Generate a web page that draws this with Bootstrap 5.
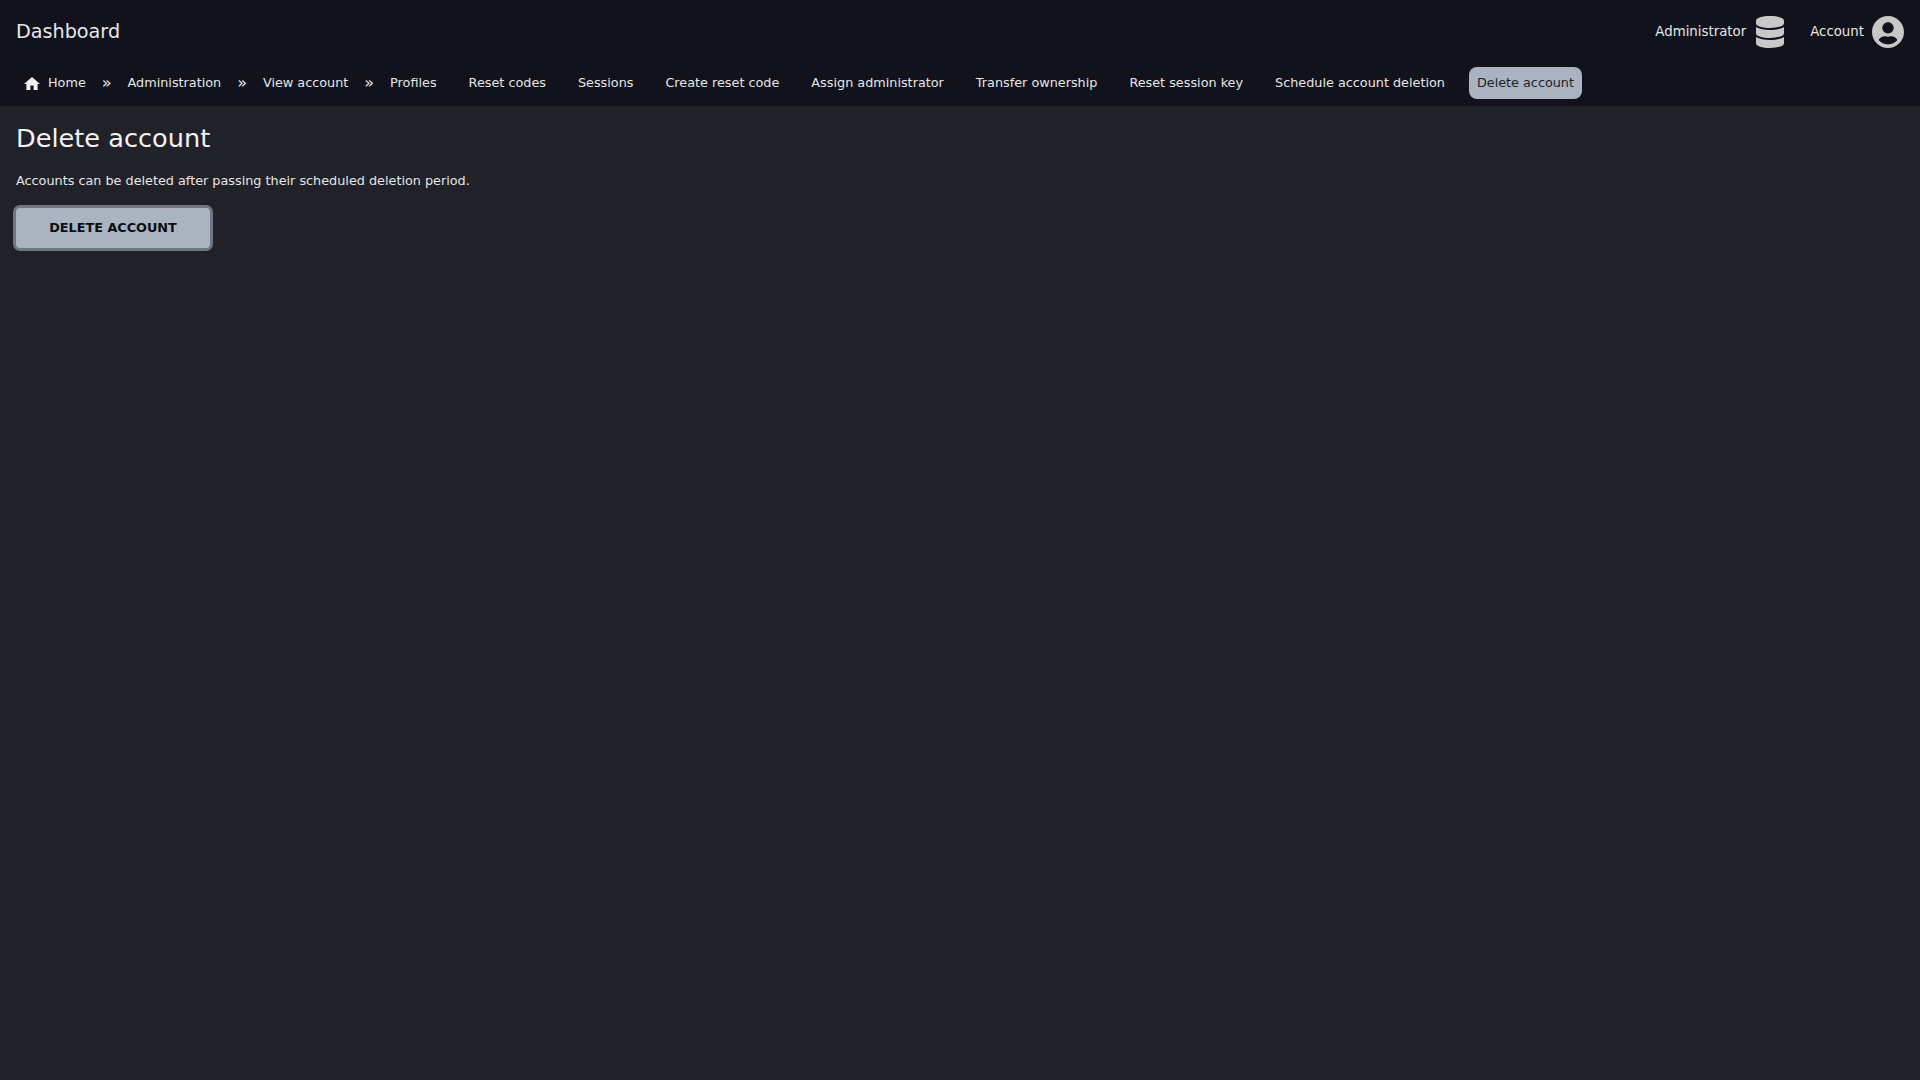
<!DOCTYPE html>
<html lang="en">
<head>
<meta charset="utf-8">
<title>Delete account</title>
<link href="https://cdn.jsdelivr.net/npm/bootstrap@5.3.0/dist/css/bootstrap.min.css" rel="stylesheet">
<style>
html, body { height: 100%; }
body { background: #212229; color: #e6e6e6; font-family: "DejaVu Sans", sans-serif; font-size: 12.8px; }
.top-head { background: #11121b; height: 106px; padding: 16px 16px 0; }
.top-row { height: 32px; }
.brand-name { color: #e8e8e8; font-size: 19.2px; line-height: 32px; text-decoration: none; }
.user-link { color: #e6e6e6; font-size: 13.33px; text-decoration: none; gap: 8px; }
.user-link svg { fill: #c8c8c8; height: 32px; display: block; }
.tool-gap { margin-left: 26px; }
.db-icon { margin-left: 2px; }
.crumbs { margin-top: 19px; gap: 16px; }
.crumb-link { color: #e6e6e6; font-size: 12.8px; line-height: 16px; padding: 8px; border-radius: 8px; text-decoration: none; display: flex; align-items: center; }
.crumb-link svg { fill: #f0f0f0; width: 16px; height: 13px; margin-right: 8px; }
.crumb-link.is-here { background: #a9b4c0; color: #212229; }
.crumb-sep { color: #e6e6e6; font-size: 16px; width: 9.75px; margin: 0 -8px; text-align: center; line-height: 16px; }
.page-main { padding: 16px; }
.page-title { font-size: 25.6px; line-height: 32px; font-weight: 400; color: #f2f2f2; margin: 0 0 18px; }
.page-note { color: #e6e6e6; line-height: 18px; margin: 0 0 18px; }
.danger-btn { background: #a9b4c0; color: #0c0d12; border: 0; border-radius: 4px; font-family: "DejaVu Sans", sans-serif; font-size: 12.8px; font-weight: 700; width: 194px; height: 40px; padding: 0; box-shadow: 0 0 0 3px #6f767f; }
.danger-btn:hover, .danger-btn:focus { background: #a9b4c0; color: #0c0d12; }
</style>
</head>
<body>
<header class="top-head">
  <div class="top-row d-flex justify-content-between align-items-center">
    <a class="brand-name" href="#">Dashboard</a>
    <div class="d-flex align-items-center right-tools">
      <a class="user-link d-flex align-items-center" href="#">Administrator
        <svg class="db-icon" viewBox="0 0 448 512" width="28" height="32"><path d="M448 73.143v45.714C448 159.143 347.667 192 224 192S0 159.143 0 118.857V73.143C0 32.857 100.333 0 224 0s224 32.857 224 73.143zM448 176v102.857C448 319.143 347.667 352 224 352S0 319.143 0 278.857V176c48.125 33.143 136.208 48.572 224 48.572S399.874 209.143 448 176zm0 160v102.857C448 479.143 347.667 512 224 512S0 479.143 0 438.857V336c48.125 33.143 136.208 48.572 224 48.572S399.874 369.143 448 336z"/></svg>
      </a>
      <a class="user-link d-flex align-items-center tool-gap" href="#">Account
        <svg viewBox="0 8 496 496" width="32" height="32"><path d="M248 8C111 8 0 119 0 256s111 248 248 248 248-111 248-248S385 8 248 8zm0 96c48.6 0 88 39.4 88 88s-39.4 88-88 88-88-39.4-88-88 39.4-88 88-88zm0 344c-58.7 0-111.3-26.6-146.5-68.2 18.8-35.4 55.6-59.8 98.5-59.8 2.4 0 4.8.4 7.1 1.1 13 4.2 26.6 6.9 40.9 6.9 14.3 0 28-2.7 40.9-6.9 2.3-.7 4.7-1.1 7.1-1.1 42.9 0 79.7 24.4 98.5 59.8C359.3 421.4 306.7 448 248 448z"/></svg>
      </a>
    </div>
  </div>
  <nav class="crumbs d-flex align-items-center">
    <a class="crumb-link" href="#"><svg viewBox="2 3 20 17" preserveAspectRatio="none"><path d="M10 20v-6h4v6h5v-8h3L12 3 2 12h3v8z"/></svg>Home</a>
    <span class="crumb-sep">»</span>
    <a class="crumb-link" href="#">Administration</a>
    <span class="crumb-sep">»</span>
    <a class="crumb-link" href="#">View account</a>
    <span class="crumb-sep">»</span>
    <a class="crumb-link" href="#">Profiles</a>
    <a class="crumb-link" href="#">Reset codes</a>
    <a class="crumb-link" href="#">Sessions</a>
    <a class="crumb-link" href="#">Create reset code</a>
    <a class="crumb-link" href="#">Assign administrator</a>
    <a class="crumb-link" href="#">Transfer ownership</a>
    <a class="crumb-link" href="#">Reset session key</a>
    <a class="crumb-link" href="#">Schedule account deletion</a>
    <a class="crumb-link is-here" href="#">Delete account</a>
  </nav>
</header>
<main class="page-main">
  <h1 class="page-title">Delete account</h1>
  <p class="page-note">Accounts can be deleted after passing their scheduled deletion period.</p>
  <button class="btn danger-btn" type="button">DELETE ACCOUNT</button>
</main>
</body>
</html>
